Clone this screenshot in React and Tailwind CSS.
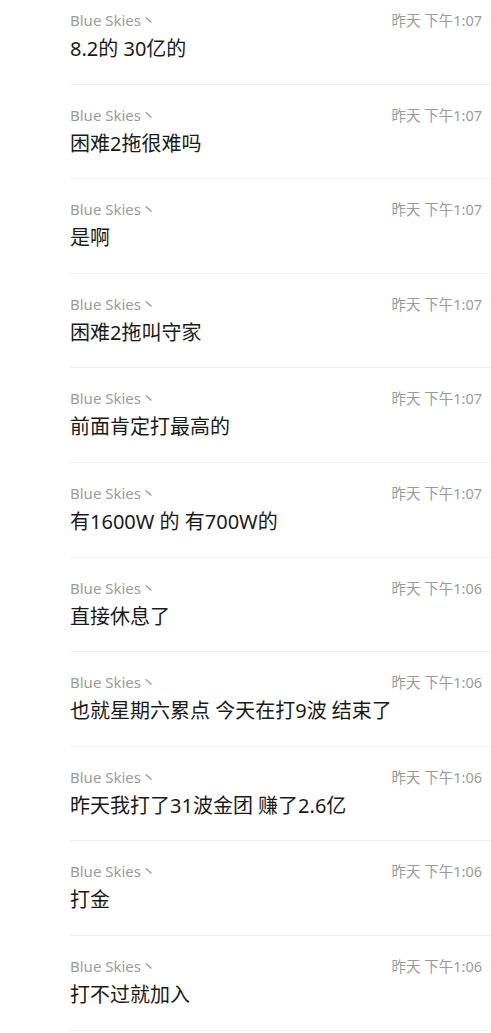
import React from "react";

const msgs = [
  ["8.2的 30亿的", "1:07"],
  ["困难2拖很难吗", "1:07"],
  ["是啊", "1:07"],
  ["困难2拖叫守家", "1:07"],
  ["前面肯定打最高的", "1:07"],
  ["有1600W 的 有700W的", "1:07"],
  ["直接休息了", "1:06"],
  ["也就星期六累点 今天在打9波 结束了", "1:06"],
  ["昨天我打了31波金团 赚了2.6亿", "1:06"],
  ["打金", "1:06"],
  ["打不过就加入", "1:06"],
];

export default function App() {
  return (
    <div
      className="w-[491px] h-[1033px] overflow-hidden bg-white"
      style={{ fontFamily: '"Noto Sans", "Noto Sans CJK SC", sans-serif' }}
    >
      <div className="-mt-[10px]">
        {msgs.map(([text, t], i) => (
          <div key={i} className="pl-[70px]">
            <div className="h-[94.6px] border-b border-[#f0f0f0] pt-[20px] pr-[9px]">
              <div className="flex items-center justify-between h-[20px]">
                <span className="text-[15px] text-[#9b9b9b] leading-[20px]">Blue Skies丶</span>
                <span className="text-[14.5px] text-[#9b9b9b] leading-[20px]">昨天 下午{t}</span>
              </div>
              <div className="mt-[5px] h-[28px] text-[20px] leading-[28px] text-[#1a1a1a]">
                {text}
              </div>
            </div>
          </div>
        ))}
      </div>
    </div>
  );
}
